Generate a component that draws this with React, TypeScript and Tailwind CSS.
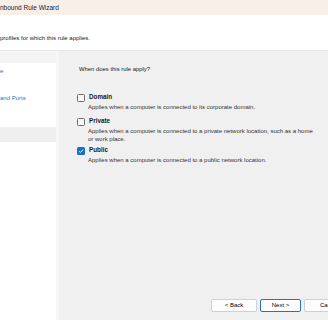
import React from "react";

const font = { fontFamily: '"Liberation Sans", Arial, sans-serif' };

function Check({ checked }: { checked?: boolean }) {
  return checked ? (
    <div className="w-[8px] h-[8px] rounded-[1.5px] bg-[#1a6fc9] flex items-center justify-center shrink-0">
      <svg width="6" height="6" viewBox="0 0 6 6">
        <path d="M1 3.2 L2.4 4.5 L5 1.6" stroke="white" strokeWidth="0.9" fill="none" />
      </svg>
    </div>
  ) : (
    <div className="w-[8px] h-[8px] rounded-[1.5px] border border-[#6b6b6b] bg-[#f7f7f7] shrink-0" />
  );
}

function Option({ label, desc, checked, mt }: { label: string; desc: React.ReactNode; checked?: boolean; mt: string }) {
  return (
    <div className={`flex flex-col ${mt}`}>
      <div className="flex items-center gap-[4px] h-[9px]">
        <Check checked={checked} />
        <span className="text-[6.3px] font-bold text-[#1a1a1a] leading-none">{label}</span>
      </div>
      <div className="pl-[11px] pt-[1px] text-[6px] leading-[8px] text-[#333] whitespace-nowrap">{desc}</div>
    </div>
  );
}

export default function App() {
  return (
    <div className="w-[328px] h-[320px] flex flex-col overflow-hidden bg-[#f0f0f0] whitespace-nowrap" style={font}>
      <div className="h-[15px] bg-[#f9efe9] flex items-center text-[6.5px] text-[#222] shrink-0">
        nbound Rule Wizard
      </div>
      <div className="h-[35px] bg-white flex items-start pt-[19px] text-[6px] text-[#222] shrink-0">
        profiles for which this rule applies.
      </div>
      <div className="h-[1px] bg-[#e8e8e8] shrink-0" />
      <div className="flex-1 flex min-w-0">
        <div className="w-[56px] shrink-0 bg-white flex flex-col">
          <div className="h-[12px] bg-[#f4f4f4]" />
          <div className="h-[16px] flex items-center text-[6px] text-[#1f6fd0]">e</div>
          <div className="h-[11px]" />
          <div className="h-[16px] flex items-center text-[6px] text-[#1f6fd0]">and Ports</div>
          <div className="h-[21px]" />
          <div className="h-[15px] bg-[#efefef]" />
        </div>
        <div className="w-[3px] shrink-0 bg-[#f6f6f6]" />
        <div className="flex-1 min-w-0 flex flex-col pl-[20px] pt-[14px]">
          <div className="text-[5.9px] text-[#222] leading-[8px]">When does this rule apply?</div>
          <div className="flex flex-col -ml-[2px]">
            <Option mt="mt-[20px]" label="Domain" desc="Applies when a computer is connected to its corporate domain." />
            <Option
              mt="mt-[6px]"
              label="Private"
              desc={<>Applies when a computer is connected to a private network location, such as a home<br />or work place.</>}
            />
            <Option mt="mt-[3px]" label="Public" checked desc="Applies when a computer is connected to a public network location." />
          </div>
          <div className="flex-1" />
          <div className="flex gap-[3px] pl-[132px] pb-[8px]">
            <div className="w-[46px] h-[13px] rounded-[2px] border border-[#d0d0d0] bg-[#fdfdfd] text-[6px] flex items-center justify-center shrink-0">&lt; Back</div>
            <div className="w-[41px] h-[13px] rounded-[2px] border border-[#2a6fc5] bg-[#fdfdfd] text-[6px] flex items-center justify-center shrink-0">Next &gt;</div>
            <div className="w-[46px] h-[13px] rounded-[2px] border border-[#d0d0d0] bg-[#fdfdfd] text-[6px] flex items-center justify-start pl-[15px] shrink-0">Cancel</div>
          </div>
        </div>
      </div>
    </div>
  );
}
